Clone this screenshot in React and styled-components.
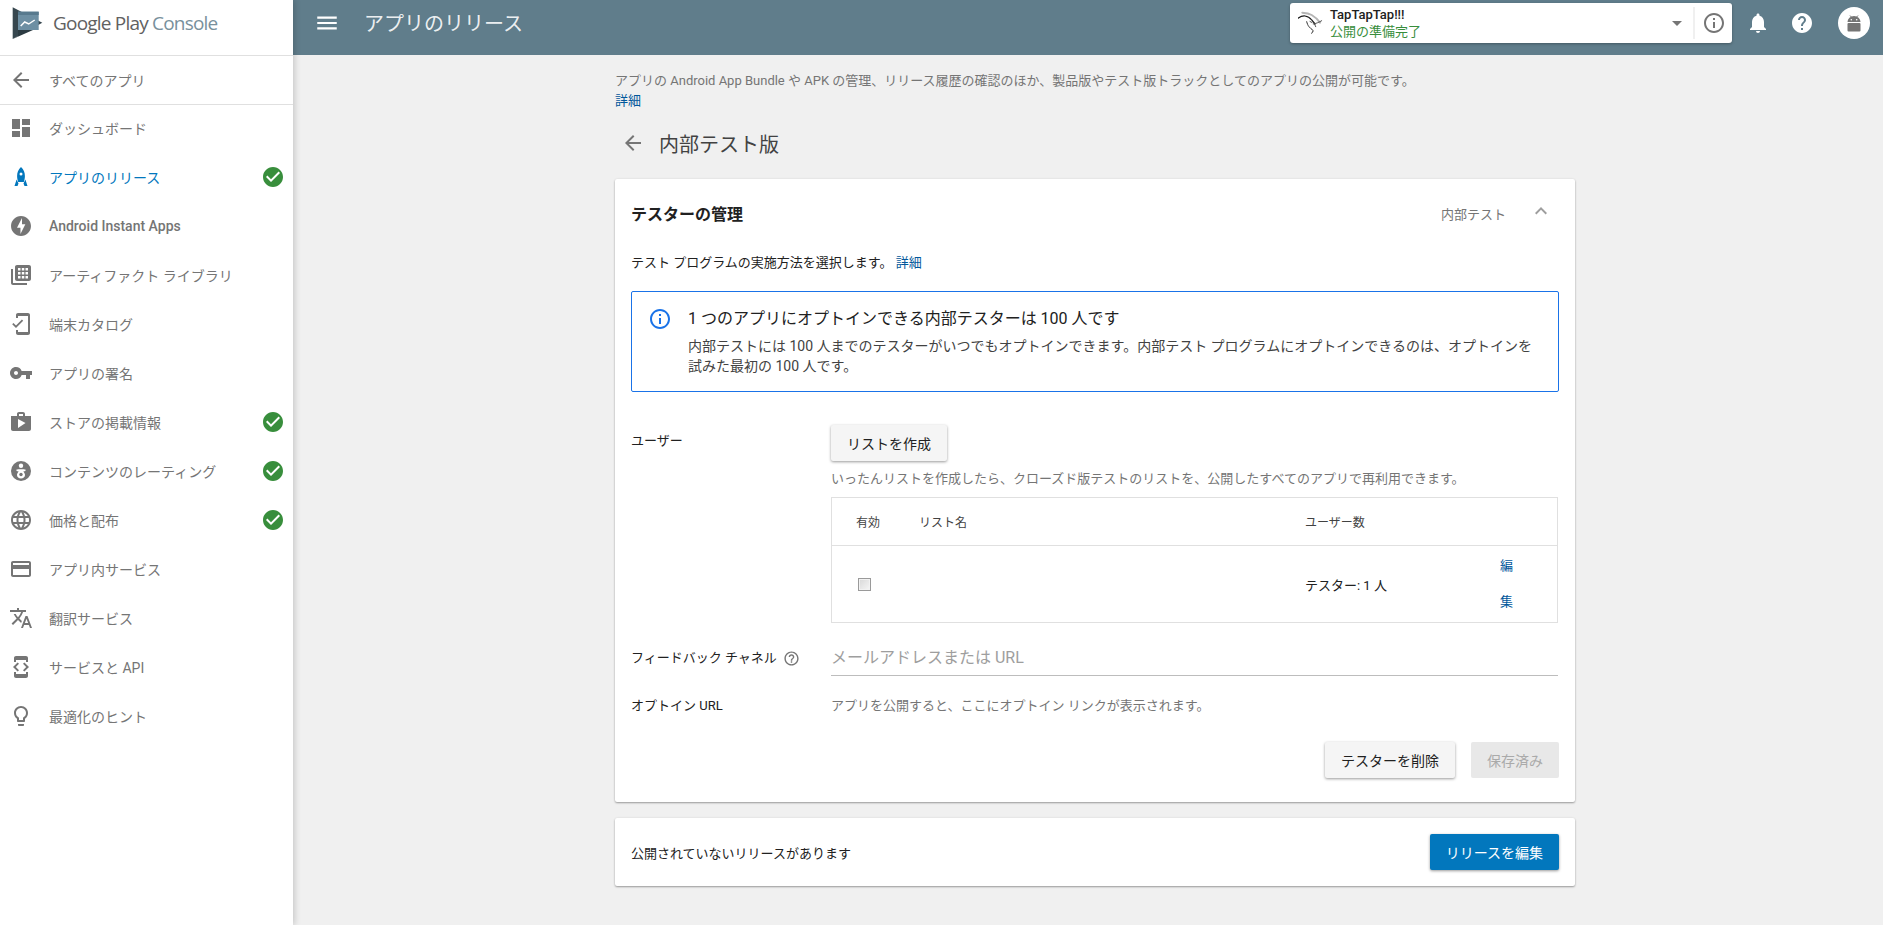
import React from 'react';
import styled, { createGlobalStyle } from 'styled-components';
import {
  MdMenu, MdArrowBack, MdDashboard, MdOfflineBolt, MdMobileFriendly, MdVpnKey, MdShop, MdLanguage,
  MdCreditCard, MdTranslate, MdDeveloperMode, MdLightbulbOutline, MdCheckCircle, MdInfoOutline,
  MdArrowDropDown, MdNotifications, MdHelp, MdExpandLess, MdHelpOutline,
} from 'react-icons/md';

const FONT = `Roboto, "Noto Sans CJK JP", sans-serif`;

const Global = createGlobalStyle`
  html, body { margin: 0; padding: 0; height: 100%; background: #f0f0f0; }
  body { font-family: ${FONT}; overflow: hidden; }
  * { box-sizing: border-box; }
`;

const Page = styled.div`
  display: grid;
  grid-template-columns: 293px 1fr;
  width: 1883px;
  height: 925px;
  overflow: hidden;
`;

const Sidebar = styled.aside`
  background: #fff;
  box-shadow: 2px 0 6px rgba(0, 0, 0, 0.16);
  height: 925px;
  position: relative;
  z-index: 2;
`;

const Brand = styled.div`
  height: 56px;
  display: flex;
  align-items: center;
  padding: 0 0 9px 12px;
  gap: 9px;
  border-bottom: 1px solid #e0e0e0;
`;

const BrandText = styled.div`
  font-family: "Open Sans", sans-serif;
  font-size: 19px;
  letter-spacing: -0.8px;
  color: #616161;
  white-space: nowrap;
  span { color: #78909c; }
`;

const BackRow = styled.div`
  height: 49px;
  display: flex;
  align-items: center;
  padding-left: 9px;
  gap: 16px;
  font-size: 14px;
  color: #757575;
  border-bottom: 1px solid #e0e0e0;
  svg { font-size: 24px; }
`;

const Nav = styled.nav`
  display: flex;
  flex-direction: column;
  margin-top: -2px;
`;

const NavItem = styled.div`
  height: 49px;
  display: flex;
  align-items: center;
  padding: 0 8px 0 9px;
  font-size: 14px;
  font-weight: ${(p) => (p.$medium ? 500 : 400)};
  color: ${(p) => (p.$active ? '#0277bd' : '#757575')};
`;

const NavIcon = styled.span`
  width: 24px;
  height: 24px;
  margin-right: 16px;
  font-size: 24px;
  display: flex;
  align-items: center;
  justify-content: center;
  flex: none;
`;

const NavLabel = styled.span`
  flex: 1;
  white-space: nowrap;
`;

const Check = styled(MdCheckCircle)`
  color: #388e3c;
  font-size: 24px;
  flex: none;
`;

const Right = styled.div`
  display: flex;
  flex-direction: column;
  min-width: 0;
`;

const TopBar = styled.header`
  height: 55px;
  background: #607d8b;
  display: flex;
  align-items: center;
  padding-left: 21px;
  color: #fff;
  flex: none;
`;

const MenuIcon = styled(MdMenu)`
  font-size: 26px;
  margin: -10px 24px 0 0;
  flex: none;
`;

const TopTitle = styled.div`
  font-size: 20px;
  color: rgba(255, 255, 255, 0.9);
  flex: 1;
  margin-top: -10px;
`;

const AppPicker = styled.div`
  width: 442px;
  height: 40px;
  margin-top: -9px;
  background: #fff;
  border-radius: 3px;
  box-shadow: 0 1px 3px rgba(0, 0, 0, 0.3);
  display: flex;
  align-items: center;
  padding-left: 8px;
  color: #212121;
`;

const AppMeta = styled.div`
  flex: 1;
  margin-left: 6px;
  display: flex;
  flex-direction: column;
`;

const AppName = styled.div`
  font-size: 13px;
  line-height: 18px;
  font-weight: 500;
`;

const AppStatus = styled.div`
  font-size: 13px;
  line-height: 16px;
  color: #388e3c;
`;

const PickerArrow = styled(MdArrowDropDown)`
  font-size: 24px;
  color: #757575;
  margin-right: 4px;
`;

const PickerInfo = styled.div`
  width: 39px;
  height: 32px;
  border-left: 2px solid #f0f0f0;
  display: flex;
  align-items: center;
  justify-content: center;
  color: #757575;
  font-size: 24px;
`;

const TopActions = styled.div`
  display: flex;
  align-items: center;
  margin-top: -9px;
  padding: 0 13px 0 14px;
  gap: 20px;
  font-size: 24px;
`;

const Avatar = styled.div`
  width: 32px;
  height: 32px;
  border-radius: 50%;
  background: #fff;
  display: flex;
  align-items: center;
  justify-content: center;
  margin-left: 4px;
`;

const Main = styled.main`
  padding: 0 0 0 322px;
  background: #f0f0f0;
  flex: 1;
`;

const Column = styled.div`
  width: 960px;
`;

const Intro = styled.p`
  margin: 0;
  padding-top: 16px;
  font-size: 13px;
  line-height: 20px;
  color: #757575;
`;

const Link = styled.a`
  color: #01579b;
`;

const PageHead = styled.div`
  height: 60px;
  margin: 2px 0 6px;
  display: flex;
  align-items: center;
  font-size: 20px;
  color: #424242;
  padding-left: 6px;
  gap: 14px;
  svg { color: #757575; font-size: 24px; }
`;

const Card = styled.section`
  background: #fff;
  border-radius: 2px;
  box-shadow: 0 1px 2px rgba(0, 0, 0, 0.35), 0 0 3px rgba(0, 0, 0, 0.06);
  padding: ${(p) => p.$pad};
  margin-bottom: 16px;
`;

const CardHead = styled.div`
  display: flex;
  align-items: center;
  height: 26px;
  margin-bottom: 27px;
`;

const CardTitle = styled.h2`
  margin: 0;
  flex: 1;
  font-size: 16px;
  font-weight: 700;
  color: #212121;
`;

const CardTag = styled.span`
  font-size: 13px;
  color: #757575;
`;

const Chevron = styled(MdExpandLess)`
  font-size: 24px;
  color: #9e9e9e;
  margin: -4px 6px 0 23px;
`;

const Lead = styled.p`
  margin: 0 0 18px;
  font-size: 13px;
  line-height: 20px;
  color: #212121;
`;

const Notice = styled.div`
  height: 101px;
  border: 1px solid #1a73e8;
  border-radius: 2px;
  display: flex;
  padding: 15px 16px;
  gap: 16px;
  margin-bottom: 33px;
`;

const NoticeIcon = styled(MdInfoOutline)`
  font-size: 24px;
  color: #1a73e8;
  flex: none;
`;

const NoticeBody = styled.div`
  color: #212121;
`;

const NoticeTitle = styled.div`
  font-size: 16px;
  line-height: 24px;
  margin-bottom: 5px;
  color: #212121;
`;

const NoticeText = styled.div`
  font-size: 14px;
  line-height: 20px;
  color: #424242;
`;

const FormRow = styled.div`
  display: grid;
  grid-template-columns: 200px 727px;
  margin-bottom: ${(p) => p.$mb || '0'};
  align-items: ${(p) => p.$align || 'start'};
`;

const Label = styled.div`
  font-size: 13px;
  line-height: 20px;
  color: #212121;
  padding-top: ${(p) => p.$pt || '0'};
  display: flex;
  align-items: center;
  gap: 6px;
`;

const Button = styled.button`
  height: 36px;
  border: 0;
  border-radius: 2px;
  font: inherit;
  font-size: 14px;
  padding: 0 16px;
  background: ${(p) => (p.$primary ? '#0277bd' : p.$disabled ? '#e8e8e8' : '#f5f5f5')};
  color: ${(p) => (p.$primary ? '#fff' : p.$disabled ? '#aaa' : '#212121')};
  box-shadow: ${(p) => (p.$disabled ? 'none' : '0 1px 3px rgba(0,0,0,0.4)')};
`;

const Hint = styled.div`
  font-size: 13px;
  line-height: 20px;
  color: #757575;
  margin: ${(p) => p.$m || '8px 0'};
`;

const Table = styled.div`
  border: 1px solid #e0e0e0;
  height: 126px;
  display: grid;
  grid-template-columns: 87px 386px 195px 1fr;
  grid-template-rows: 48px 1fr;
  font-size: 13px;
  margin-bottom: 17px;
`;

const Th = styled.div`
  border-bottom: 1px solid #e0e0e0;
  color: #424242;
  font-size: 12px;
  display: flex;
  align-items: center;
  padding-left: ${(p) => p.$pl || '0'};
`;

const Td = styled.div`
  display: flex;
  align-items: center;
  padding-left: ${(p) => p.$pl || '0'};
  color: #212121;
`;

const Box = styled.input.attrs({ type: 'checkbox', disabled: true })`
  appearance: none;
  width: 13px;
  height: 13px;
  margin: 0;
  border: 1px solid #9a9a9a;
  background: linear-gradient(135deg, #d8d8d8, #f6f6f6);
  outline: 1px solid #f2f2f2;
  outline-offset: -2px;
`;

const EditLink = styled(Link)`
  display: block;
  width: 14px;
  line-height: 36px;
  font-size: 13px;
`;

const Input = styled.input`
  width: 100%;
  height: 36px;
  border: 0;
  border-bottom: 1px solid #bdbdbd;
  font: inherit;
  font-size: 16px;
  outline: none;
  padding: 0 0 1px;
  background: transparent;
  &::placeholder { color: #9e9e9e; opacity: 1; }
`;

const HelpIcon = styled(MdHelpOutline)`
  font-size: 17px;
  color: #757575;
`;

const Actions = styled.div`
  display: flex;
  justify-content: flex-end;
  gap: 16px;
`;

const Footer = styled.div`
  display: flex;
  align-items: center;
  justify-content: space-between;
  font-size: 13px;
  color: #212121;
`;

const Logo = () => (
  <svg width="32" height="34" viewBox="0 0 32 34">
    <path d="M0.700 1.300 L30.300 16.700 L0.700 33 Z" fill="#37474f" />
    <path d="M0.700 33 L6 30 V24 H21 L0.700 33 Z" fill="#2c3b42" />
    <rect x="6" y="5.700" width="20.700" height="18.300" fill="#6d8fa3" />
    <rect x="6" y="5.700" width="20.700" height="3.300" fill="#587a8e" />
    <path d="M8.700 20 L12.700 16 L16.700 18 L22.700 14" fill="none" stroke="#fff" strokeWidth="1.500" />
  </svg>
);

const Rocket = () => (
  <svg width="24" height="24" viewBox="0 0 24 24" fill="#0277bd">
    <path d="M12 2c-2.800 2.600-3.900 5.600-3.900 9 0 2.200.5 4.300 1.100 6h5.600c.6-1.700 1.100-3.800 1.100-6 0-3.400-1.100-6.400-3.900-9zm0 8.500a1.500 1.500 0 1 1 0-3 1.500 1.500 0 0 1 0 3z" />
    <path d="M7.600 14.500 5.500 21h3l1-2.600-1.900-3.900zM16.400 14.500 18.500 21h-3l-1-2.600 1.900-3.900z" />
  </svg>
);

const Library = () => (
  <svg width="24" height="24" viewBox="0 0 24 24" fill="currentColor">
    <path d="M4 6H2v14c0 1.100.9 2 2 2h14v-2H4V6zm16-4H8c-1.100 0-2 .9-2 2v12c0 1.100.9 2 2 2h12c1.100 0 2-.9 2-2V4c0-1.100-.9-2-2-2z" />
    <path fill="#fff" d="M9 5h2.500v2.500H9zm3.800 0h2.500v2.500h-2.500zm3.700 0H19v2.500h-2.500zM9 9h2.500v2.500H9zm3.800 0h2.500v2.500h-2.500zm3.700 0H19v2.500h-2.500zM9 13h2.500v2.500H9zm3.800 0h2.500v2.500h-2.500zm3.700 0H19v2.500h-2.500z" />
  </svg>
);

const Rating = () => (
  <svg width="24" height="24" viewBox="0 0 24 24" fill="currentColor">
    <path d="M12 2a10 10 0 1 0 0 20 10 10 0 0 0 0-20z" />
    <circle cx="12" cy="6.800" r="2.200" fill="#fff" />
    <path d="M7.500 10.500c1.500-.5 7.500-.5 9 0V12c-.8.3-1.600.5-2.200.6.900 1 1.700 2.300 1.700 3.500 0 2.100-1.800 3.400-4 3.400s-4-1.300-4-3.400c0-1.200.8-2.500 1.700-3.500-.6-.1-1.400-.3-2.200-.6v-1.500z" fill="#fff" />
    <circle cx="12" cy="15.500" r="1.700" />
  </svg>
);

const AppMark = () => (
  <svg width="26" height="32" viewBox="0 0 26 32" fill="none" strokeLinecap="round">
    <path d="M4.300 5.700C8 6 11 6.500 13.700 8c3 1.700 6 4.500 8.300 7.700" strokeWidth="2" stroke="#b5b5b5" />
    <path d="M0 11.300C2.500 9.500 5 8.800 7 9c2.800.3 5 1.800 6.700 4l3.300 4" strokeWidth="1.200" stroke="#1a1a1a" />
    <path d="M8.700 14.700c.5 2 1.200 3.700 2.300 5 1.200 1.500 2.700 2.500 4.300 4l-1.600 2.600" strokeWidth="1" stroke="#333" />
    <path d="M15.300 17c3-.5 5.800-1.800 8.400-3.300M17.700 19.700l-1.500-3.500M12 14.500l2 1" strokeWidth="0.900" stroke="#444" />
  </svg>
);

const AndroidGlyph = () => (
  <svg width="16" height="17" viewBox="0 0 16 17" fill="#757575">
    <path d="M1.500 7a6.500 6 0 0 1 13 0z" />
    <path d="M4 .5l1.800 2M12 .5l-1.800 2" stroke="#757575" strokeWidth="1" />
    <circle cx="5.300" cy="4.800" r=".8" fill="#fff" />
    <circle cx="10.700" cy="4.800" r=".8" fill="#fff" />
    <rect x="1.500" y="8" width="13" height="8.500" rx="1" />
  </svg>
);

const items = [
  { icon: <MdDashboard />, label: 'ダッシュボード' },
  { icon: <Rocket />, label: 'アプリのリリース', active: true, check: true },
  { icon: <MdOfflineBolt />, label: 'Android Instant Apps', medium: true },
  { icon: <Library />, label: 'アーティファクト ライブラリ' },
  { icon: <MdMobileFriendly />, label: '端末カタログ' },
  { icon: <MdVpnKey />, label: 'アプリの署名' },
  { icon: <MdShop />, label: 'ストアの掲載情報', check: true },
  { icon: <Rating />, label: 'コンテンツのレーティング', check: true },
  { icon: <MdLanguage />, label: '価格と配布', check: true },
  { icon: <MdCreditCard />, label: 'アプリ内サービス' },
  { icon: <MdTranslate />, label: '翻訳サービス' },
  { icon: <MdDeveloperMode />, label: 'サービスと API' },
  { icon: <MdLightbulbOutline />, label: '最適化のヒント' },
];

export default function App() {
  return (
    <>
      <Global />
      <Page>
        <Sidebar>
          <Brand>
            <Logo />
            <BrandText>Google Play <span>Console</span></BrandText>
          </Brand>
          <BackRow>
            <MdArrowBack />
            <span>すべてのアプリ</span>
          </BackRow>
          <Nav>
            {items.map((it) => (
              <NavItem key={it.label} $active={it.active} $medium={it.medium}>
                <NavIcon>{it.icon}</NavIcon>
                <NavLabel>{it.label}</NavLabel>
                {it.check && <Check />}
              </NavItem>
            ))}
          </Nav>
        </Sidebar>
        <Right>
          <TopBar>
            <MenuIcon />
            <TopTitle>アプリのリリース</TopTitle>
            <AppPicker>
              <AppMark />
              <AppMeta>
                <AppName>TapTapTap!!!</AppName>
                <AppStatus>公開の準備完了</AppStatus>
              </AppMeta>
              <PickerArrow />
              <PickerInfo><MdInfoOutline /></PickerInfo>
            </AppPicker>
            <TopActions>
              <MdNotifications />
              <MdHelp />
              <Avatar><AndroidGlyph /></Avatar>
            </TopActions>
          </TopBar>
          <Main>
            <Column>
              <Intro>
                アプリの Android App Bundle や APK の管理、リリース履歴の確認のほか、製品版やテスト版トラックとしてのアプリの公開が可能です。
                <br />
                <Link>詳細</Link>
              </Intro>
              <PageHead>
                <MdArrowBack />
                <span>内部テスト版</span>
              </PageHead>
              <Card $pad="21px 16px 24px">
                <CardHead>
                  <CardTitle>テスターの管理</CardTitle>
                  <CardTag>内部テスト</CardTag>
                  <Chevron />
                </CardHead>
                <Lead>テスト プログラムの実施方法を選択します。 <Link>詳細</Link></Lead>
                <Notice>
                  <NoticeIcon />
                  <NoticeBody>
                    <NoticeTitle>1 つのアプリにオプトインできる内部テスターは 100 人です</NoticeTitle>
                    <NoticeText>
                      内部テストには 100 人までのテスターがいつでもオプトインできます。内部テスト プログラムにオプトインできるのは、オプトインを試みた最初の 100 人です。
                    </NoticeText>
                  </NoticeBody>
                </Notice>
                <FormRow>
                  <Label $pt="6px">ユーザー</Label>
                  <div>
                    <Button>リストを作成</Button>
                    <Hint>いったんリストを作成したら、クローズド版テストのリストを、公開したすべてのアプリで再利用できます。</Hint>
                    <Table>
                      <Th $pl="24px">有効</Th>
                      <Th>リスト名</Th>
                      <Th>ユーザー数</Th>
                      <Th />
                      <Td $pl="26px"><Box /></Td>
                      <Td />
                      <Td>テスター: 1 人</Td>
                      <Td><EditLink>編集</EditLink></Td>
                    </Table>
                  </div>
                </FormRow>
                <FormRow $mb="20px" $align="center">
                  <Label>フィードバック チャネル <HelpIcon /></Label>
                  <Input placeholder="メールアドレスまたは URL" />
                </FormRow>
                <FormRow $mb="26px">
                  <Label>オプトイン URL</Label>
                  <Hint $m="0">アプリを公開すると、ここにオプトイン リンクが表示されます。</Hint>
                </FormRow>
                <Actions>
                  <Button>テスターを削除</Button>
                  <Button $disabled>保存済み</Button>
                </Actions>
              </Card>
              <Card $pad="16px">
                <Footer>
                  <span>公開されていないリリースがあります</span>
                  <Button $primary>リリースを編集</Button>
                </Footer>
              </Card>
            </Column>
          </Main>
        </Right>
      </Page>
    </>
  );
}
